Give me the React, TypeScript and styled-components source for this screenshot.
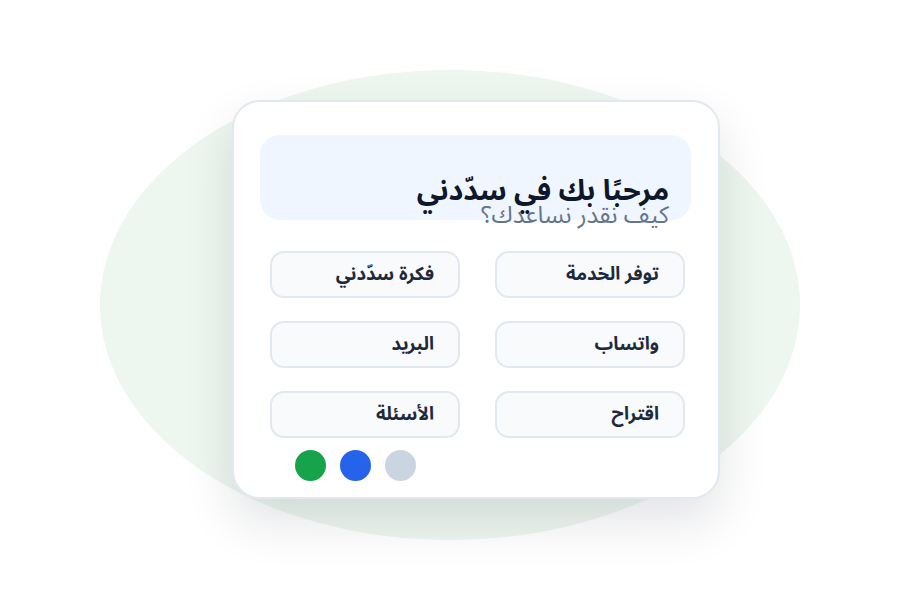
import React from "react";
import styled, { createGlobalStyle } from "styled-components";

const Global = createGlobalStyle`
  html, body { margin: 0; padding: 0; background: #ffffff; }
  body { font-family: "Noto Sans Arabic", "Noto Sans Arabic UI", "Noto Naskh Arabic", "Noto Sans", sans-serif; }
`;

const Stage = styled.div`
  width: 900px;
  height: 600px;
  display: grid;
  grid-template: 1fr / 1fr;
  align-items: start;
  justify-items: start;
  overflow: hidden;
  background: #ffffff;
`;

const Blob = styled.div`
  grid-area: 1 / 1;
  width: 700px;
  height: 470px;
  margin: 70px 0 0 100px;
  border-radius: 50%;
  background: #edf6ef;
`;

const Card = styled.div`
  grid-area: 1 / 1;
  margin: 100px 0 0 232px;
  width: 488px;
  height: 399px;
  box-sizing: border-box;
  border: 2px solid #e2e8f0;
  border-radius: 28px;
  background: #ffffff;
  box-shadow: 0 22px 50px rgba(15, 23, 42, 0.12);
  direction: rtl;
  padding: 33px 27px 0 26px;
  display: flex;
  flex-direction: column;
`;

const Header = styled.div`
  height: 85px;
  box-sizing: border-box;
  border-radius: 20px;
  background: #eff6ff;
  padding: 0 22px;
  display: flex;
  flex-direction: column;
  justify-content: flex-end;
`;

const Title = styled.h2`
  margin: 0 0 -2px 0;
  font-size: 28.5px;
  font-weight: 700;
  line-height: 30px;
  color: #0f172a;
`;

const Subtitle = styled.p`
  margin: 0 0 -8px 0;
  font-size: 24px;
  font-weight: 400;
  line-height: 24px;
  color: #64748b;
`;

const Grid = styled.div`
  margin: 31px 6px 0 10px;
  display: grid;
  grid-template-columns: 190px 190px;
  column-gap: 35px;
  row-gap: 23px;
`;

const Option = styled.button`
  height: 47px;
  box-sizing: border-box;
  border: 2px solid #e2e8f0;
  border-radius: 14px;
  background: #f8fafc;
  font-family: inherit;
  font-size: 18.5px;
  font-weight: 700;
  color: #1e293b;
  text-align: right;
  padding: 0 24px;
  direction: rtl;
  cursor: pointer;
`;

const Dots = styled.div`
  margin: 12px 0 0 0;
  padding-left: 35px;
  display: flex;
  direction: ltr;
  gap: 14px;
`;

const Dot = styled.span<{ $c: string }>`
  width: 31px;
  height: 31px;
  border-radius: 50%;
  background: ${(p) => p.$c};
`;

const options = ["توفر الخدمة", "فكرة سدّدني", "واتساب", "البريد", "اقتراح", "الأسئلة"];

export default function App() {
  return (
    <>
      <Global />
      <Stage>
        <Blob />
        <Card>
          <Header>
            <Title>مرحبًا بك في سدّدني</Title>
            <Subtitle>كيف نقدر نساعدك؟</Subtitle>
          </Header>
          <Grid>
            {options.map((o) => (
              <Option key={o}>{o}</Option>
            ))}
          </Grid>
          <Dots>
            <Dot $c="#16a34a" />
            <Dot $c="#2563eb" />
            <Dot $c="#cbd5e1" />
          </Dots>
        </Card>
      </Stage>
    </>
  );
}
